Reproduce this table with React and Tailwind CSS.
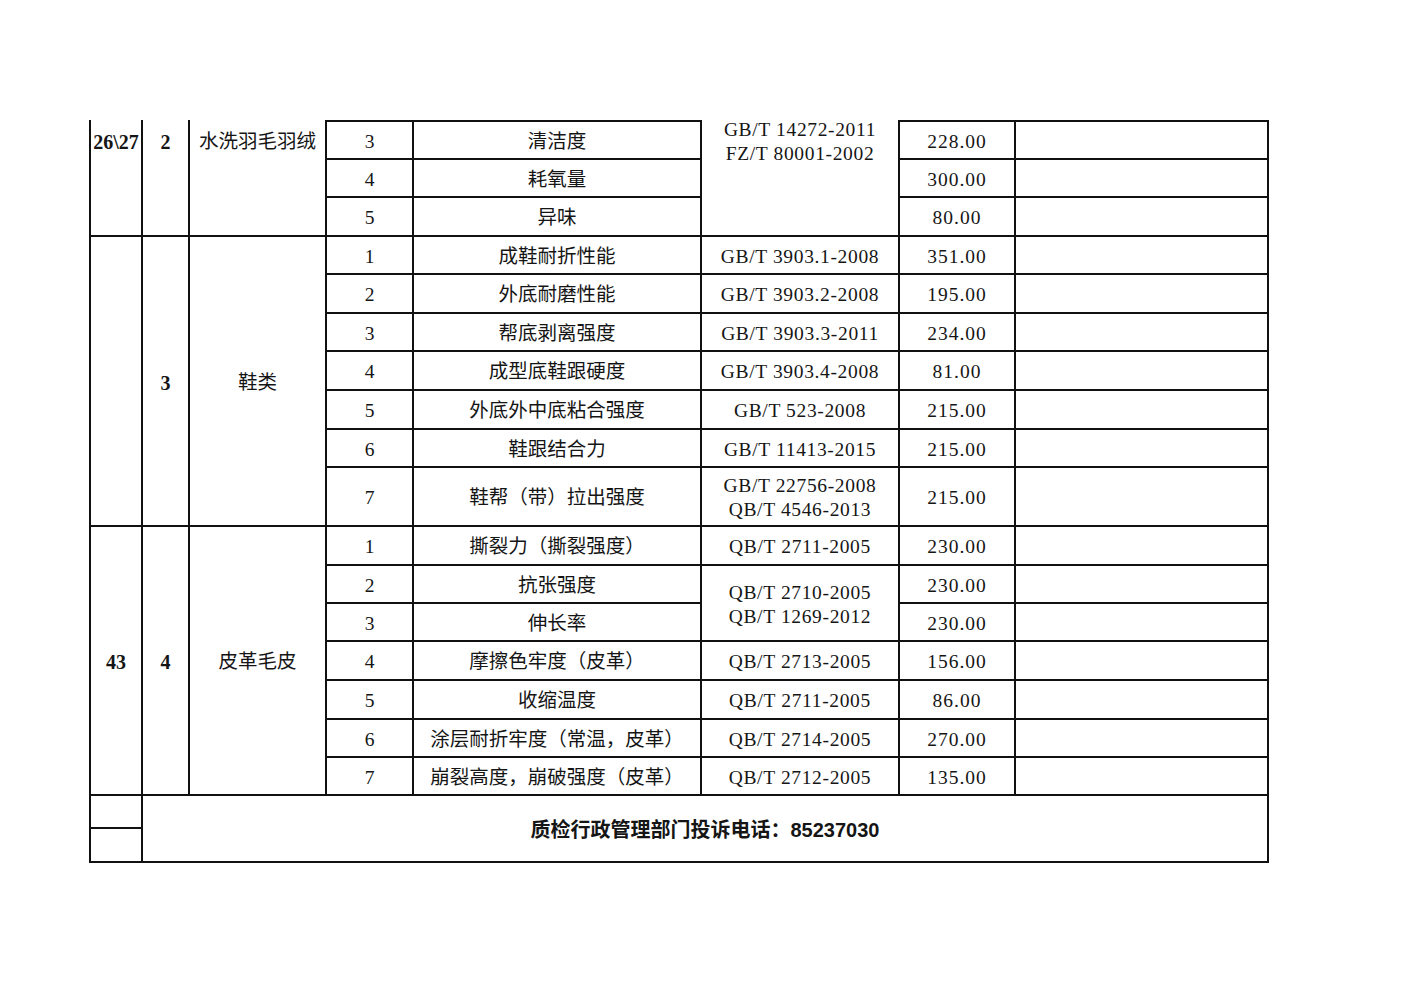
const serif = "font-['Liberation_Serif','Noto_Sans_CJK_SC',serif]";

function Cell({ className = "", children }) {
  return (
    <div className={`bg-white flex items-center justify-center text-center whitespace-nowrap pt-[3px] ${className}`}>
      {children}
    </div>
  );
}

// row: grid row start (1-based). group rows carry seq / item / price
const shoes = [
  { row: 5, seq: "1", item: "成鞋耐折性能", std: ["GB/T 3903.1-2008"], price: "351.00" },
  { row: 6, seq: "2", item: "外底耐磨性能", std: ["GB/T 3903.2-2008"], price: "195.00" },
  { row: 7, seq: "3", item: "帮底剥离强度", std: ["GB/T 3903.3-2011"], price: "234.00" },
  { row: 8, seq: "4", item: "成型底鞋跟硬度", std: ["GB/T 3903.4-2008"], price: "81.00" },
  { row: 9, seq: "5", item: "外底外中底粘合强度", std: ["GB/T 523-2008"], price: "215.00" },
  { row: 10, seq: "6", item: "鞋跟结合力", std: ["GB/T 11413-2015"], price: "215.00" },
  { row: 11, seq: "7", item: "鞋帮（带）拉出强度", std: ["GB/T 22756-2008", "QB/T 4546-2013"], price: "215.00" },
];

const leather = [
  { row: 12, seq: "1", item: "撕裂力（撕裂强度）", std: ["QB/T 2711-2005"], price: "230.00" },
  { row: 13, seq: "2", item: "抗张强度", std: ["QB/T 2710-2005", "QB/T 1269-2012"], span: 2, price: "230.00" },
  { row: 14, seq: "3", item: "伸长率", price: "230.00" },
  { row: 15, seq: "4", item: "摩擦色牢度（皮革）", std: ["QB/T 2713-2005"], price: "156.00" },
  { row: 16, seq: "5", item: "收缩温度", std: ["QB/T 2711-2005"], price: "86.00" },
  { row: 17, seq: "6", item: "涂层耐折牢度（常温，皮革）", std: ["QB/T 2714-2005"], price: "270.00" },
  { row: 18, seq: "7", item: "崩裂高度，崩破强度（皮革）", std: ["QB/T 2712-2005"], price: "135.00" },
];

const rowStart = {
  2: "row-start-2", 3: "row-start-3", 4: "row-start-4", 5: "row-start-5", 6: "row-start-6",
  7: "row-start-7", 8: "row-start-8", 9: "row-start-9", 10: "row-start-10", 11: "row-start-11",
  12: "row-start-12", 13: "row-start-13", 14: "row-start-14", 15: "row-start-15", 16: "row-start-16",
  17: "row-start-17", 18: "row-start-18",
};

function Rows({ list }) {
  return list.map((r) => (
    <div key={r.row} className="contents">
      <Cell className={`col-start-4 ${rowStart[r.row]}`}>{r.seq}</Cell>
      <Cell className={`col-start-5 ${rowStart[r.row]}`}>{r.item}</Cell>
      {r.std && (
        <Cell className={`col-start-6 ${rowStart[r.row]} ${r.span === 2 ? "row-span-2" : ""} flex-col leading-[24px] tracking-[0.65px]`}>
          {r.std.map((s) => (
            <span key={s}>{s}</span>
          ))}
        </Cell>
      )}
      <Cell className={`col-start-7 ${rowStart[r.row]} tracking-[1px]`}>{r.price}</Cell>
      <Cell className={`col-start-8 ${rowStart[r.row]}`} />
    </div>
  ));
}

export default function App() {
  return (
    <div className={`min-h-screen bg-white pt-[120px] pl-[89px] text-[19.5px] text-[#151515] ${serif}`}>
      <div className="w-[1180px] bg-[#111] px-[2px] pb-[2px] grid gap-[2px] grid-cols-[50px_45px_135px_85px_286px_196px_114px_251px] grid-rows-[0px_36px_36px_37px_36px_37px_36px_37px_37px_36px_57px_37px_36px_36px_37px_37px_36px_36px_31px_32px]">
        {/* 水洗羽毛羽绒 */}
        <div className="bg-white col-start-1 row-start-1 row-span-4 font-bold text-[20px] leading-[38px] pt-[3px] text-center whitespace-nowrap font-['Liberation_Serif',serif]">
          26\27
        </div>
        <div className="bg-white col-start-2 row-start-1 row-span-4 font-bold text-[20px] leading-[38px] pt-[3px] text-center">2</div>
        <div className="bg-white col-start-3 row-start-1 row-span-4 leading-[38px] pt-[3px] pl-[9px] whitespace-nowrap">水洗羽毛羽绒</div>
        <Cell className="col-start-4 row-start-2">3</Cell>
        <Cell className="col-start-5 row-start-2">清洁度</Cell>
        <div className="bg-white col-start-6 row-start-1 row-span-4 text-center leading-[24px] tracking-[0.65px]">
          <div className="-mt-[2px]">GB/T 14272-2011</div>
          <div>FZ/T 80001-2002</div>
        </div>
        <Cell className="col-start-7 row-start-2 tracking-[1px]">228.00</Cell>
        <Cell className="col-start-8 row-start-2" />
        <Cell className="col-start-4 row-start-3">4</Cell>
        <Cell className="col-start-5 row-start-3">耗氧量</Cell>
        <Cell className="col-start-7 row-start-3 tracking-[1px]">300.00</Cell>
        <Cell className="col-start-8 row-start-3" />
        <Cell className="col-start-4 row-start-4">5</Cell>
        <Cell className="col-start-5 row-start-4">异味</Cell>
        <Cell className="col-start-7 row-start-4 tracking-[1px]">80.00</Cell>
        <Cell className="col-start-8 row-start-4" />

        {/* 鞋类 */}
        <Cell className="col-start-1 row-start-5 row-span-7" />
        <Cell className="col-start-2 row-start-5 row-span-7 font-bold text-[20px]">3</Cell>
        <Cell className="col-start-3 row-start-5 row-span-7">鞋类</Cell>
        <Rows list={shoes} />

        {/* 皮革毛皮 */}
        <Cell className="col-start-1 row-start-12 row-span-7 font-bold text-[20px]">43</Cell>
        <Cell className="col-start-2 row-start-12 row-span-7 font-bold text-[20px]">4</Cell>
        <Cell className="col-start-3 row-start-12 row-span-7">皮革毛皮</Cell>
        <Rows list={leather} />

        {/* footer */}
        <Cell className="col-start-1 row-start-19" />
        <Cell className="col-start-1 row-start-20" />
        <Cell className="col-start-2 col-span-7 row-start-19 row-span-2 font-bold text-[20px] font-['Liberation_Sans','Noto_Sans_CJK_SC',sans-serif]">
          质检行政管理部门投诉电话：85237030
        </Cell>
      </div>
    </div>
  );
}
